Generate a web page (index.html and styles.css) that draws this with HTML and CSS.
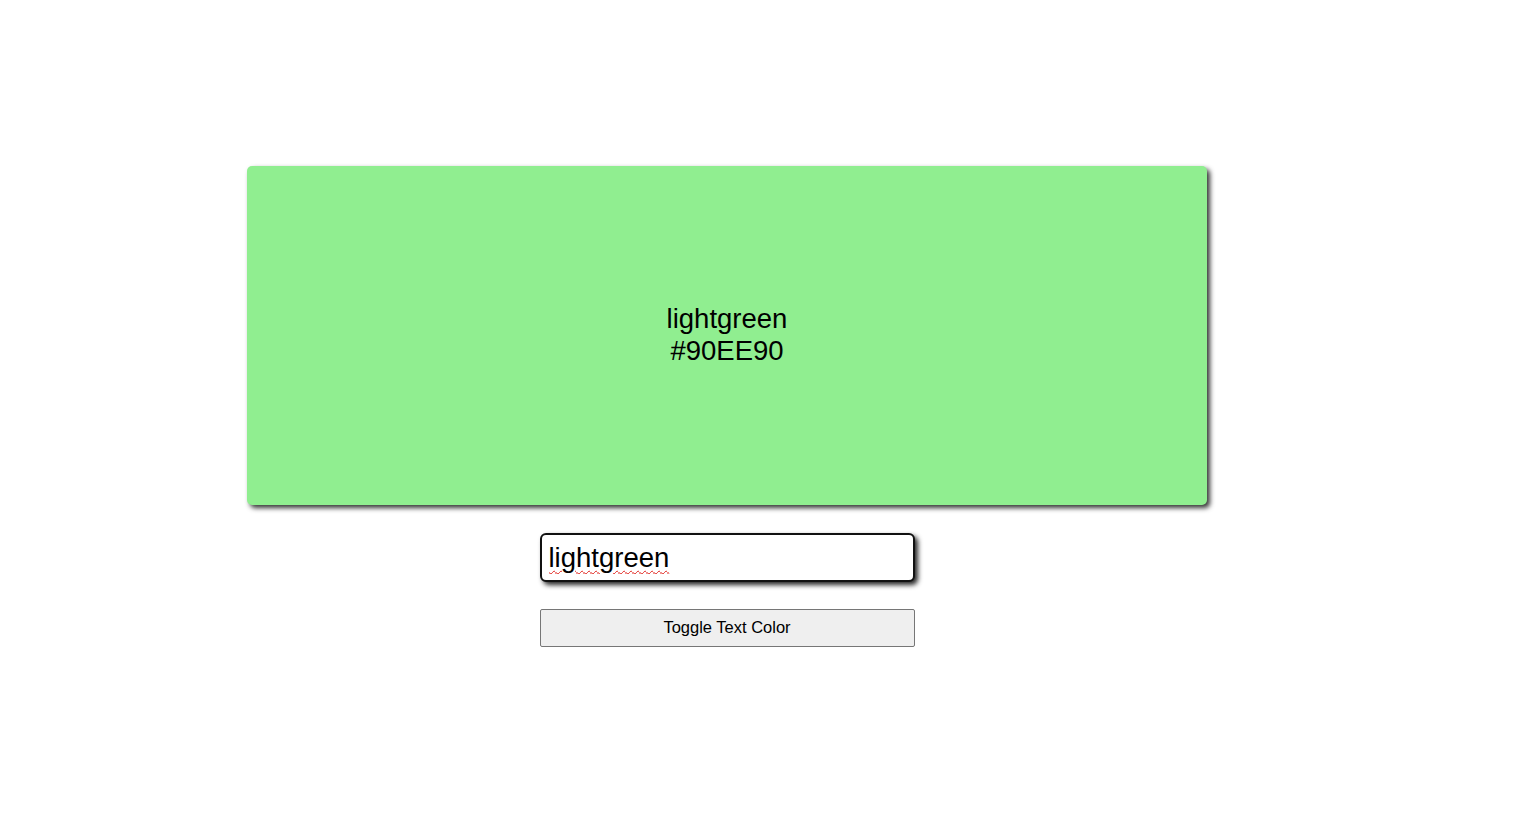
FILE: index.html
```html
<!DOCTYPE html>
<html>
<head>
<meta charset="utf-8">
<link rel="stylesheet" href="styles.css">
</head>
<body>
<div class="app">
  <div class="swatch">
    <div class="label">lightgreen<br>#90EE90</div>
  </div>
  <input class="color-input" type="text" value="lightgreen" spellcheck="true">
  <button class="toggle">Toggle Text Color</button>
</div>
</body>
</html>
```
FILE: styles.css
```css
html, body {
  margin: 0;
  padding: 0;
  background: #ffffff;
}
body {
  font-family: "Liberation Sans", Arial, sans-serif;
}
.app {
  width: 960px;
  margin: 166px 0 0 247px;
  display: flex;
  flex-direction: column;
  align-items: center;
}
.swatch {
  width: 960px;
  height: 339px;
  background: #90EE90;
  border-radius: 5px;
  box-shadow: 3px 3px 5px rgba(0, 0, 0, 0.8);
  display: flex;
  align-items: center;
  justify-content: center;
}
.label {
  color: #000;
  font-size: 27.5px;
  line-height: 32px;
  text-align: center;
  padding-bottom: 2px;
}
.color-input {
  box-sizing: border-box;
  width: 375px;
  height: 49px;
  margin-top: 28px;
  padding: 0 7px;
  border: 2px solid #111;
  border-radius: 6px;
  box-shadow: 3px 3px 5px rgba(0, 0, 0, 0.85);
  font-family: "Liberation Sans", Arial, sans-serif;
  font-size: 27.5px;
  color: #000;
  background: #fff;
  outline: none;
  text-decoration: underline wavy #e0201a;
  text-decoration-thickness: 1px;
  text-underline-offset: 3px;
}
.toggle {
  box-sizing: border-box;
  width: 375px;
  height: 38px;
  margin-top: 27px;
  padding: 0 0 2px 0;
  border: 1px solid #767676;
  border-radius: 2px;
  background: #efefef;
  font-family: "Liberation Sans", Arial, sans-serif;
  font-size: 16.5px;
  color: #000;
}
```
